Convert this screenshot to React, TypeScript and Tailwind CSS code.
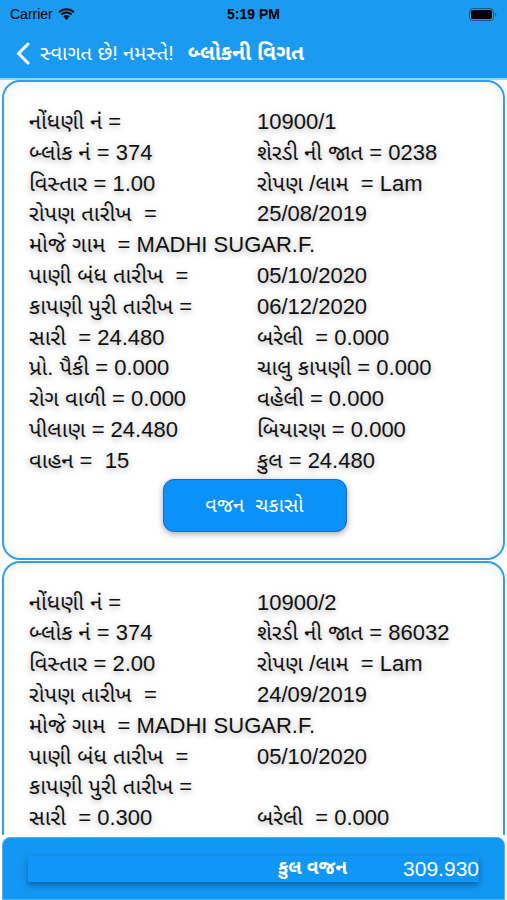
import React from 'react';

type Row = { left: string; right?: string; span?: boolean };

const card1: Row[] = [
  { left: 'નોંધણી નં =', right: '10900/1' },
  { left: 'બ્લોક નં = 374', right: 'શેરડી ની જાત = 0238' },
  { left: 'વિસ્તાર = 1.00', right: 'રોપણ /લામ  = Lam' },
  { left: 'રોપણ તારીખ  =', right: '25/08/2019' },
  { left: 'મોજે ગામ  = MADHI SUGAR.F.', span: true },
  { left: 'પાણી બંધ તારીખ  =', right: '05/10/2020' },
  { left: 'કાપણી પુરી તારીખ =', right: '06/12/2020' },
  { left: 'સારી  = 24.480', right: 'બરેલી  = 0.000' },
  { left: 'પ્રો. પૈકી = 0.000', right: 'ચાલુ કાપણી = 0.000' },
  { left: 'રોગ વાળી = 0.000', right: 'વહેલી = 0.000' },
  { left: 'પીલાણ = 24.480', right: 'બિયારણ = 0.000' },
  { left: 'વાહન =  15', right: 'કુલ = 24.480' },
];

// second card is cut by the total bar, only the visible rows
const card2: Row[] = [
  { left: 'નોંધણી નં =', right: '10900/2' },
  { left: 'બ્લોક નં = 374', right: 'શેરડી ની જાત = 86032' },
  { left: 'વિસ્તાર = 2.00', right: 'રોપણ /લામ  = Lam' },
  { left: 'રોપણ તારીખ  =', right: '24/09/2019' },
  { left: 'મોજે ગામ  = MADHI SUGAR.F.', span: true },
  { left: 'પાણી બંધ તારીખ  =', right: '05/10/2020' },
  { left: 'કાપણી પુરી તારીખ =', right: '' },
  { left: 'સારી  = 0.300', right: 'બરેલી  = 0.000' },
];

const font = { fontFamily: '"Liberation Sans", "Noto Sans", "Noto Sans Gujarati", sans-serif' };

const BlockCard = ({ rows, showButton }: { rows: Row[]; showButton?: boolean }) => (
  <div className="mx-[2px] shrink-0 rounded-[18px] border-2 border-[#2f9ff0] bg-white px-[25px] pt-[25px] pb-[26px] shadow-[inset_0_0_14px_rgba(0,0,0,0.07)]">
    <div className="grid grid-cols-[228px_1fr] text-[22px] leading-[30.8px] text-[#111] whitespace-pre [text-shadow:0_2px_6px_rgba(0,0,0,0.35)]">
      {rows.map((r, i) =>
        r.span ? (
          <div key={i} className="col-span-2">{r.left}</div>
        ) : (
          <React.Fragment key={i}>
            <div>{r.left}</div>
            <div>{r.right}</div>
          </React.Fragment>
        )
      )}
    </div>
    {showButton && (
      <div className="flex justify-center pt-[2px]">
        <button className="ml-[2px] h-[53px] w-[184px] rounded-[11px] border border-[#1766d8] bg-[#0a91fa] text-[20px] text-white shadow-[0_2px_6px_rgba(0,0,0,0.35)] whitespace-pre">
          વજન  ચકાસો
        </button>
      </div>
    )}
  </div>
);

const App = () => {
  return (
    <div className="flex h-[900px] w-[507px] flex-col overflow-hidden bg-white" style={font}>
      {/* status + nav */}
      <div className="bg-[#1b9af2] shrink-0">
        <div className="flex h-[28px] items-center justify-between px-[10px] text-[14px] text-black">
          <div className="flex w-[120px] items-center gap-[5px]">
            <span>Carrier</span>
            <svg width="17" height="12" viewBox="0 0 17 12">
              <path d="M8.5 2.2c2.6 0 5 1 6.8 2.7l1.3-1.4C14.4 1.4 11.6.2 8.5.2S2.6 1.4.4 3.5l1.3 1.4C3.5 3.2 5.9 2.2 8.5 2.2z" fill="black" />
              <path d="M8.5 5.6c1.7 0 3.2.6 4.4 1.7l1.3-1.4C12.7 4.5 10.7 3.6 8.5 3.6S4.3 4.5 2.8 5.9l1.3 1.4c1.2-1.1 2.7-1.7 4.4-1.7z" fill="black" />
              <path d="M8.5 8.9c.8 0 1.5.3 2.1.8L8.5 12 6.4 9.7c.6-.5 1.3-.8 2.1-.8z" fill="black" />
              <path d="M8.5 7c1.2 0 2.3.4 3.1 1.2l-1.1 1.2c-.5-.4-1.2-.7-2-.7s-1.5.3-2 .7L5.4 8.2C6.2 7.4 7.3 7 8.5 7z" fill="black" />
            </svg>
          </div>
          <span className="font-bold">5:19 PM</span>
          <div className="flex w-[120px] justify-end">
            <svg width="28" height="13" viewBox="0 0 28 13">
              <rect x="0.5" y="0.5" width="24" height="12" rx="3.5" fill="none" stroke="rgba(0,0,0,0.4)" />
              <rect x="2" y="2" width="21" height="9" rx="2" fill="black" />
              <path d="M26 4.5v4c.8-.3 1.3-1.1 1.3-2s-.5-1.7-1.3-2z" fill="rgba(0,0,0,0.4)" />
            </svg>
          </div>
        </div>
        <div className="flex h-[50px] items-center pl-[16px] text-white">
          <svg width="14" height="23" viewBox="0 0 14 23" className="shrink-0">
            <polyline points="12,2 2.5,11.5 12,21" fill="none" stroke="white" strokeWidth="3" strokeLinecap="round" strokeLinejoin="round" />
          </svg>
          <span className="ml-[10px] text-[20px]">સ્વાગત છે! નમસ્તે!</span>
          <span className="ml-[14px] text-[21px] font-bold">બ્લોકની વિગત</span>
        </div>
        <div className="h-[2px] bg-[#9ad3f8]" />
      </div>

      {/* list */}
      <div className="flex flex-1 flex-col gap-[1px] overflow-hidden">
        <BlockCard rows={card1} showButton />
        <BlockCard rows={card2} />
      </div>

      {/* total bar */}
      <div className="shrink-0 px-[2px] pt-[2px] bg-white">
        <div className="flex h-[63px] items-center rounded-t-[8px] border border-[#4fb2f5] bg-[#1297f4] px-[25px]">
          <div className="flex h-[26px] flex-1 items-center justify-end bg-[#0f96f6] shadow-[0_3px_6px_rgba(0,0,0,0.35)] text-white">
            <span className="text-[19px] font-bold">કુલ વજન</span>
            <span className="ml-[56px] text-[21px]">309.930</span>
          </div>
        </div>
      </div>
    </div>
  );
};

export default App;
